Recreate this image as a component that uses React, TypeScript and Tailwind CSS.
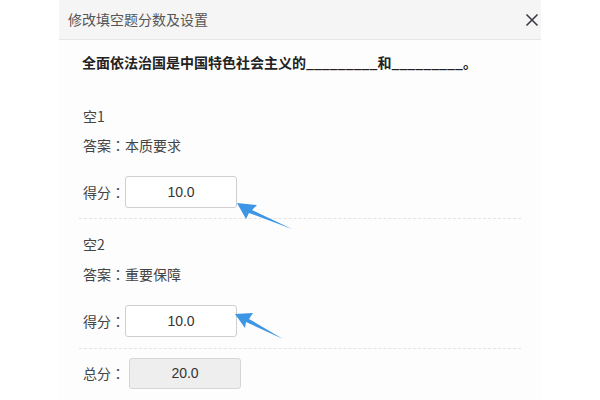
import React from "react";

const cjk = { fontFamily: '"Noto Sans CJK SC", "Liberation Sans", sans-serif' };
const tc = { fontFamily: '"Noto Sans CJK TC", "Noto Sans CJK SC", sans-serif' };

function Arrow({ points }: { points: string }) {
  return <polygon points={points} fill="#3d95e6" />;
}

function Colon() {
  return <span style={tc}>：</span>;
}

export default function App() {
  return (
    <div className="relative w-[600px] h-[400px] bg-white overflow-hidden" style={cjk}>
      <div className="ml-[59px] w-[482px] h-[400px] bg-[#fdfdfd] flex flex-col">
        <div className="h-[40px] shrink-0 bg-[#f5f5f5] border-b border-[#e6e6e6] flex items-center justify-between pl-[9px] pr-[2px]">
          <span className="text-[14px] text-[#555]">修改填空题分数及设置</span>
          <svg width="14" height="14" viewBox="0 0 14 14">
            <path d="M1.5 1.5 L12.5 12.5 M12.5 1.5 L1.5 12.5" stroke="#3c3c48" strokeWidth="1.6" />
          </svg>
        </div>
        <div className="px-[20px] flex flex-col">
          <div className="mt-[12px] h-[20px] leading-[20px] pl-[3px] text-[14px] font-bold text-[#222]">
            全面依法治国是中国特色社会主义的_________和_________。
          </div>

          <div className="mt-[34px] h-[20px] leading-[20px] pl-[4px] text-[14px] text-[#444]">空1</div>
          <div className="mt-[9px] h-[20px] leading-[20px] pl-[4px] text-[14px] text-[#444]">答案<Colon />本质要求</div>
          <div className="mt-[21px] flex items-center pl-[4px]">
            <span className="w-[42px] text-[14px] text-[#444]">得分<Colon /></span>
            <div className="w-[112px] h-[32px] border border-[#cfcfcf] rounded-[3px] bg-white flex items-center justify-center text-[14px] text-[#333]" style={{ fontFamily: '"Liberation Sans", sans-serif' }}>10.0</div>
          </div>
          <div className="mt-[10px] border-t border-dashed border-[#e3e3e3]" />

          <div className="mt-[15px] h-[20px] leading-[20px] pl-[4px] text-[14px] text-[#444]">空2</div>
          <div className="mt-[10px] h-[20px] leading-[20px] pl-[4px] text-[14px] text-[#444]">答案<Colon />重要保障</div>
          <div className="mt-[21px] flex items-center pl-[4px]">
            <span className="w-[42px] text-[14px] text-[#444]">得分<Colon /></span>
            <div className="w-[112px] h-[32px] border border-[#cfcfcf] rounded-[3px] bg-white flex items-center justify-center text-[14px] text-[#333]" style={{ fontFamily: '"Liberation Sans", sans-serif' }}>10.0</div>
          </div>
          <div className="mt-[11px] border-t border-dashed border-[#e3e3e3]" />

          <div className="mt-[9px] flex items-center pl-[4px]">
            <span className="w-[46px] text-[14px] text-[#444]">总分<Colon /></span>
            <div className="w-[112px] h-[31px] border border-[#d6d6d6] rounded-[3px] bg-[#eeeeee] flex items-center justify-center text-[14px] text-[#333]" style={{ fontFamily: '"Liberation Sans", sans-serif' }}>20.0</div>
          </div>
        </div>
      </div>
      <svg className="absolute left-0 top-0 pointer-events-none" width="600" height="400">
        <Arrow points="237,203 257,205 252,210 292,229 249,213 246,219" />
        <Arrow points="235,314 253,313 249,319 283,339 246,322 245,328" />
      </svg>
    </div>
  );
}
